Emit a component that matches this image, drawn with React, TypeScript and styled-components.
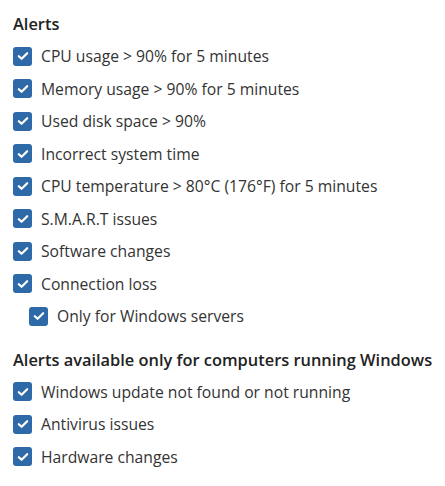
import React from "react";
import styled, { createGlobalStyle } from "styled-components";

const Global = createGlobalStyle`
  html, body { margin: 0; padding: 0; background: #fff; }
  body { font-family: "Open Sans", "Noto Sans", sans-serif; }
`;

const Page = styled.div`
  padding: 8px 0 0 13px;
  display: flex;
  flex-direction: column;
`;

const Heading = styled.div<{ $top?: number }>`
  font-size: 16.4px;
  font-weight: 600;
  color: #222;
  height: 32px;
  line-height: 32px;
  margin-top: ${(p) => p.$top ?? 0}px;
`;

const Row = styled.label<{ $indent?: boolean }>`
  display: flex;
  align-items: center;
  gap: 9px;
  height: 32.5px;
  padding-left: ${(p) => (p.$indent ? 16 : 0)}px;
  font-size: 15.7px;
  color: #333;
`;

const Box = styled.span`
  width: 19px;
  height: 19px;
  border-radius: 3px;
  background: #2e69a8;
  display: flex;
  align-items: center;
  justify-content: center;
  flex-shrink: 0;
`;

const Check = () => (
  <Box>
    <svg width="12" height="10" viewBox="0 0 12 10">
      <path d="M1.8 5.2 L4.6 7.8 L10.2 2.2" stroke="#fff" strokeWidth="2.2" fill="none" strokeLinecap="round" strokeLinejoin="round" />
    </svg>
  </Box>
);

const items1 = [
  "CPU usage > 90% for 5 minutes",
  "Memory usage > 90% for 5 minutes",
  "Used disk space > 90%",
  "Incorrect system time",
  "CPU temperature > 80°C (176°F) for 5 minutes",
  "S.M.A.R.T issues",
  "Software changes",
  "Connection loss",
];
const items2 = [
  "Windows update not found or not running",
  "Antivirus issues",
  "Hardware changes",
];

export default function App() {
  return (
    <>
      <Global />
      <Page>
        <Heading>Alerts</Heading>
        {items1.map((t) => (
          <Row key={t}>
            <Check />
            {t}
          </Row>
        ))}
        <Row $indent>
          <Check />
          Only for Windows servers
        </Row>
        <Heading $top={11}>Alerts available only for computers running Windows</Heading>
        {items2.map((t) => (
          <Row key={t}>
            <Check />
            {t}
          </Row>
        ))}
      </Page>
    </>
  );
}
